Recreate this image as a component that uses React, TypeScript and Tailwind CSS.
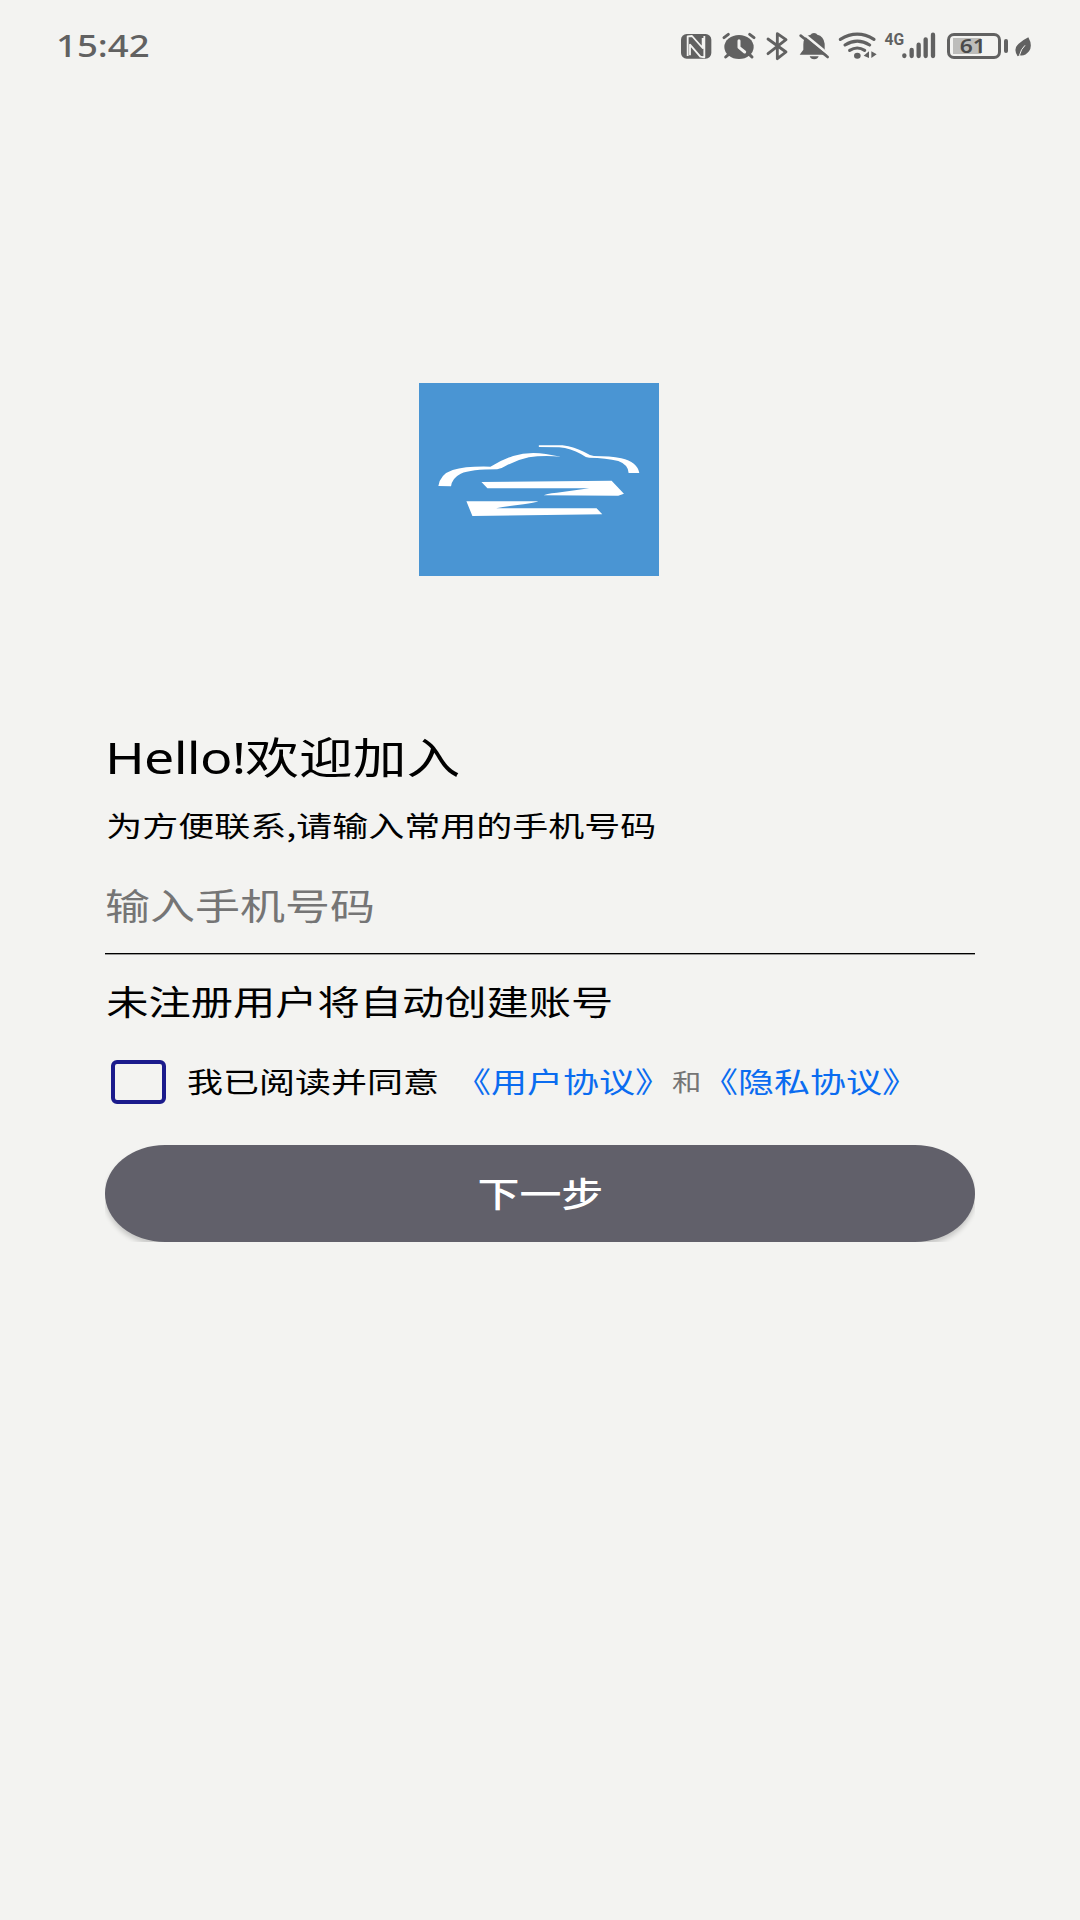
import React from 'react';

const CJK = "font-['Noto_Sans_CJK_SC',sans-serif]";

function NfcIcon() {
  return (
    <svg className="h-[50px] w-[38px] shrink-0" viewBox="24 0 114 150">
      <rect x="33" y="42" width="91" height="74" rx="17" fill="#616161" />
      <path d="M53 108V49L66 48L98 84V54M103 48V112L91 110L60 74V106" fill="none" stroke="#f3f3f1" strokeWidth="5.500" strokeLinejoin="round" />
    </svg>
  );
}

function AlarmIcon() {
  return (
    <svg className="h-[50px] w-[44px] shrink-0" viewBox="138 0 132 150">
      <ellipse cx="207" cy="81" rx="44" ry="36" fill="#616161" />
      <path d="M162 53l13-10M252 53l-13-10M176 103l-9 8M238 103l8 8" stroke="#616161" strokeWidth="9" strokeLinecap="round" />
      <path d="M207 62v20l17 14" fill="none" stroke="#f3f3f1" strokeWidth="9" strokeLinecap="round" strokeLinejoin="round" />
    </svg>
  );
}

function BluetoothIcon() {
  return (
    <svg className="h-[50px] w-[34px] shrink-0" viewBox="270 0 102 150">
      <path d="M294 57l54 39-26 20V41l26 18-54 42" fill="none" stroke="#616161" strokeWidth="8.5" strokeLinecap="round" strokeLinejoin="round" />
    </svg>
  );
}

function BellOffIcon() {
  return (
    <svg className="h-[50px] w-[40px] shrink-0" viewBox="372 0 120 150">
      <path d="M389 104l11-15V73q0-25 22-29q2-5 10-5t10 5q19 4 22 27v17l12 16z" fill="#616161" />
      <path d="M419 109h27q-3 9-13.500 9t-13.500-9z" fill="#616161" />
      <path d="M399 40l80 66" stroke="#f3f3f1" strokeWidth="8" />
      <path d="M392 47l81 64" stroke="#616161" strokeWidth="8" strokeLinecap="round" />
    </svg>
  );
}

function WifiIcon() {
  return (
    <svg className="h-[50px] w-[46px] shrink-0" viewBox="492 0 138 150">
      <g fill="none" stroke="#616161" strokeWidth="9.5" strokeLinecap="round">
        <path d="M511 58q51-31 101 0" />
        <path d="M525 75q37-23 74 0" />
        <path d="M539 91q23-14 45 0" />
      </g>
      <ellipse cx="562" cy="107" rx="10" ry="9" fill="#616161" />
      <path d="M597 94v20l-16-7zM604 94v20l16-11z" fill="#616161" />
    </svg>
  );
}

function SignalIcon() {
  return (
    <svg className="h-[50px] w-[37px] shrink-0" viewBox="120 0 111 150">
      <g stroke="#616161" strokeWidth="13" strokeLinecap="round">
        <path d="M133 106v2M155 90v18M176 74v34M197 58v50M219 44v64" />
      </g>
    </svg>
  );
}

function LeafIcon() {
  return (
    <svg className="ml-[5px] h-[50px] w-[20px] shrink-0" viewBox="459 0 60 150">
      <path d="M505 52q14 25 2 42q-12 15-27 12l-7 3q-15-22 3-38q13-11 29-19z" fill="#616161" />
      <path d="M495 76q-12 11-17 31" fill="none" stroke="#f3f3f1" strokeWidth="3" />
    </svg>
  );
}

function StatusBar() {
  return (
    <header className="flex h-[90px] items-start pt-5 pl-[56px] text-[#616161]">
      <span className="h-[50px] w-[622px] origin-left scale-x-[1.22] whitespace-nowrap font-['Noto_Sans',sans-serif] text-[30px] leading-[52px] font-medium">
        15:42
      </span>
      <div className="flex h-[50px] items-center">
        <NfcIcon />
        <AlarmIcon />
        <BluetoothIcon />
        <BellOffIcon />
        <WifiIcon />
        <span className="w-[20px] origin-left -translate-y-[6px] scale-x-[0.92] pl-[5px] font-['Roboto',sans-serif] text-[17px] leading-5 font-bold">
          4G
        </span>
        <SignalIcon />
        <div className="ml-[10px] flex h-[26px] w-[54px] translate-y-px items-center rounded-[7px] border-[3px] border-[#616161] p-[3px]">
          <div className="flex h-4 w-7 items-center justify-center bg-[#bdbdbb]">
            <span className="scale-x-[1.2] pl-[10px] font-['Noto_Sans',sans-serif] text-[19px] leading-4 font-semibold text-[#4a4a4a]">61</span>
          </div>
        </div>
        <div className="ml-[3px] h-[14px] w-1 translate-y-px rounded-full bg-[#616161]" />
        <LeafIcon />
      </div>
    </header>
  );
}

function CarLogo() {
  return (
    <svg className="h-[193px] w-[240px]" viewBox="27 24 719 579" preserveAspectRatio="none">
      <rect x="27" y="24" width="719" height="579" fill="#4a95d3" />
      <g fill="#fff">
        <path d="M85 333q6-36 43-48q40-12 113-10q35-21 68-32q45-14 98-6l45 8q-54-5-96 2q-37 8-70 26q-14 9-25 10q-78 0-109 13q-26 13-29 38z" />
        <path d="M386 211h71q36 5 65 20q14 9 29 12q49 0 82 7q48 11 54 44h-32q-1-25-31-36q-36-9-87-10q-12-1-25-11q-30-17-65-20l-61-1z" />
        <path d="M214 321l390-4l37 39l-17 6l-223-1q4-5 39-8l97-13l-305 0z" />
        <path d="M169 379l216 0q-12 5-45 9q-45 5-82 12h301l17 18l-389 5z" />
      </g>
    </svg>
  );
}

function Line({ className, children }: { className: string; children: React.ReactNode }) {
  return <span className={'block origin-left scale-x-[1.25] whitespace-nowrap ' + className}>{children}</span>;
}

export default function App() {
  return (
    <main className={'flex h-[1920px] w-[1080px] flex-col overflow-hidden bg-[#f3f3f1] text-black ' + CJK}>
      <StatusBar />
      <div className="mt-[293px] flex h-[193px] w-full pl-[419px]">
        <CarLogo />
      </div>
      <section className="mt-[139px] flex flex-col pr-[105px] pl-[105px]">
        <h1 className="h-[79px]">
          <Line className="text-[43px] leading-[80px]">
            <span className="font-['Noto_Sans',sans-serif] tracking-[-0.6px]">Hello!</span>欢迎加入
          </Line>
        </h1>
        <p className="h-[60px]">
          <Line className="pl-px text-[28.8px] leading-[61px]">为方便联系,请输入常用的手机号码</Line>
        </p>
        <div className="mb-px flex h-[100px] items-center border-b border-black shadow-[0_1px_0_#999998]">
          <Line className="text-[36px] leading-[100px] text-[#757575]">输入手机号码</Line>
        </div>
        <p className="h-[92px]">
          <Line className="pl-px text-[33.8px] leading-[92px]">未注册用户将自动创建账号</Line>
        </p>
        <div className="flex h-[70px] items-center">
          <button aria-label="同意协议" className="ml-[6px] h-[44px] w-[55px] shrink-0 rounded-[6px] border-[4px] border-[#1b1b8c]" />
          <div className="w-[289px] shrink-0 -translate-y-px pl-[21px]">
            <Line className="w-[216px] text-[28.8px] leading-[58px]">我已阅读并同意</Line>
          </div>
          <div className="w-[217px] shrink-0 -translate-y-px">
            <Line className="w-[172px] text-[28.8px] leading-[58px] text-[#0a6cf0]">《用户协议》</Line>
          </div>
          <div className="w-[30px] shrink-0 -translate-y-px">
            <Line className="w-[24px] text-[23.5px] leading-[58px] text-[#757575]">和</Line>
          </div>
          <div className="w-[200px] shrink-0 -translate-y-px">
            <Line className="w-[160px] text-[28.8px] leading-[58px] text-[#0a6cf0]">《隐私协议》</Line>
          </div>
        </div>
        <div className="mt-[28px] h-[97px] overflow-hidden">
          <button className="flex h-[97px] w-full items-center justify-center rounded-[60px/48.500px] bg-[#61606a] text-white shadow-[0_4px_5px_rgba(0,0,0,0.18)]">
            <span className="-translate-y-px scale-x-[1.25] text-[33.600px] leading-[97px] font-medium">下一步</span>
          </button>
        </div>
      </section>
    </main>
  );
}
